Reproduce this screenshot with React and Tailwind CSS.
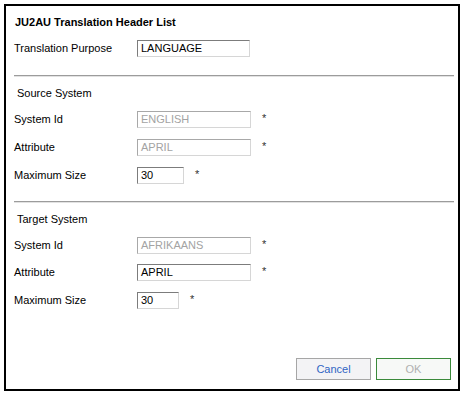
import React from "react";

const font = { fontFamily: '"Liberation Sans", Arial, sans-serif' };

function Field({ value, width, disabled }) {
  return (
    <div
      className={
        "h-[17px] flex items-center pl-[3px] border border-t-[#7c7c7c] border-l-[#7c7c7c] border-r-[#d6d6d6] border-b-[#d6d6d6] bg-white text-[11px] leading-none " +
        (disabled ? "text-[#a3a3a3] border-t-[#a8a8a8] border-l-[#a8a8a8]" : "text-black")
      }
      style={{ width }}
    >
      {value}
    </div>
  );
}

function Row({ label, value, width, disabled, starGap = 11, className = "" }) {
  return (
    <div className={"flex items-center pl-[8px] h-[17px] " + className}>
      <div className="w-[123px] text-[11px] text-black leading-none">{label}</div>
      <Field value={value} width={width} disabled={disabled} />
      <div className="text-[11px] text-[#333] leading-none -mt-[3px]" style={{ marginLeft: starGap }}>
        *
      </div>
    </div>
  );
}

export default function App() {
  return (
    <div className="w-[464px] h-[395px] bg-white p-[4px]" style={font}>
      <div className="w-[456px] h-[387px] border-2 border-black flex flex-col">
        <div className="pl-[9px] pt-[9px] text-[11px] font-bold text-black leading-[14px] h-[23px]">
          JU2AU Translation Header List
        </div>
        <div className="flex items-center pl-[8px] h-[17px] mt-[11px]">
          <div className="w-[123px] text-[11px] text-black leading-none">Translation Purpose</div>
          <Field value="LANGUAGE" width={113} />
        </div>
        <div className="ml-[8px] mr-[4px] mt-[18px] h-[2px] border-t border-t-[#9c9c9c] border-b border-b-[#e2e2e2]" />
        <div className="pl-[11px] mt-[9px] text-[11px] text-black leading-[14px]">Source System</div>
        <Row label="System Id" value="ENGLISH" width={114} disabled className="mt-[11px]" />
        <Row label="Attribute" value="APRIL" width={114} disabled className="mt-[11px]" />
        <Row label="Maximum Size" value="30" width={47} className="mt-[11px]" />
        <div className="ml-[8px] mr-[4px] mt-[17px] h-[2px] border-t border-t-[#9c9c9c] border-b border-b-[#e2e2e2]" />
        <div className="pl-[11px] mt-[9px] text-[11px] text-black leading-[14px]">Target System</div>
        <Row label="System Id" value="AFRIKAANS" width={114} disabled className="mt-[11px]" />
        <Row label="Attribute" value="APRIL" width={114} className="mt-[10px]" />
        <Row label="Maximum Size" value="30" width={42} className="mt-[11px]" />
        <div className="flex-1" />
        <div className="flex justify-end gap-[5px] pr-[7px] pb-[9px]">
          <div className="w-[75px] h-[22px] flex items-center justify-center border border-[#a6a6a6] bg-[#f3f3f5] text-[11px] text-[#2f64c4]">
            Cancel
          </div>
          <div className="w-[75px] h-[22px] flex items-center justify-center border border-[#3b8a3b] bg-[#f7f9f7] text-[11px] text-[#b0b0b0]">
            OK
          </div>
        </div>
      </div>
    </div>
  );
}
